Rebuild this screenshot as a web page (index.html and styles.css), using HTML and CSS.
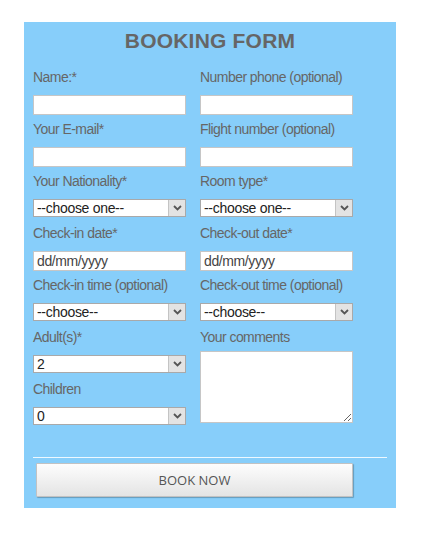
FILE: index.html
```html
<!DOCTYPE html>
<html lang="en">
<head>
  <meta charset="UTF-8">
  <meta name="viewport" content="width=device-width, initial-scale=1.0">
  <title>Booking Form</title>
  <link rel="stylesheet" href="styles.css">
</head>
<body>
  <div class="booking">
    <h2 class="booking-title">BOOKING FORM</h2>

    <form class="booking-grid" id="booking-form">
      <div class="field">
        <label for="name">Name:*</label>
        <input type="text" id="name">
      </div>
      <div class="field">
        <label for="phone">Number phone (optional)</label>
        <input type="text" id="phone">
      </div>

      <div class="field">
        <label for="email">Your E-mail*</label>
        <input type="text" id="email">
      </div>
      <div class="field">
        <label for="flight">Flight number (optional)</label>
        <input type="text" id="flight">
      </div>

      <div class="field">
        <label for="nationality">Your Nationality*</label>
        <div class="select-wrap">
          <select id="nationality"><option>--choose one--</option></select>
          <span class="select-arrow"><svg width="9" height="6" viewBox="0 0 9 6"><path d="M1 1l3.5 3.5L8 1" fill="none" stroke="#555" stroke-width="1.8"/></svg></span>
        </div>
      </div>
      <div class="field">
        <label for="room">Room type*</label>
        <div class="select-wrap">
          <select id="room"><option>--choose one--</option></select>
          <span class="select-arrow"><svg width="9" height="6" viewBox="0 0 9 6"><path d="M1 1l3.5 3.5L8 1" fill="none" stroke="#555" stroke-width="1.8"/></svg></span>
        </div>
      </div>

      <div class="field">
        <label for="checkin">Check-in date*</label>
        <input type="text" id="checkin" placeholder="dd/mm/yyyy">
      </div>
      <div class="field">
        <label for="checkout">Check-out date*</label>
        <input type="text" id="checkout" placeholder="dd/mm/yyyy">
      </div>

      <div class="field">
        <label for="checkin-time">Check-in time (optional)</label>
        <div class="select-wrap">
          <select id="checkin-time"><option>--choose--</option></select>
          <span class="select-arrow"><svg width="9" height="6" viewBox="0 0 9 6"><path d="M1 1l3.5 3.5L8 1" fill="none" stroke="#555" stroke-width="1.8"/></svg></span>
        </div>
      </div>
      <div class="field">
        <label for="checkout-time">Check-out time (optional)</label>
        <div class="select-wrap">
          <select id="checkout-time"><option>--choose--</option></select>
          <span class="select-arrow"><svg width="9" height="6" viewBox="0 0 9 6"><path d="M1 1l3.5 3.5L8 1" fill="none" stroke="#555" stroke-width="1.8"/></svg></span>
        </div>
      </div>

      <div class="field">
        <label for="adults">Adult(s)*</label>
        <div class="select-wrap">
          <select id="adults"><option>2</option></select>
          <span class="select-arrow"><svg width="9" height="6" viewBox="0 0 9 6"><path d="M1 1l3.5 3.5L8 1" fill="none" stroke="#555" stroke-width="1.8"/></svg></span>
        </div>
      </div>
      <div class="field field-comments">
        <label for="comments">Your comments</label>
        <textarea id="comments"></textarea>
      </div>

      <div class="field">
        <label for="children">Children</label>
        <div class="select-wrap">
          <select id="children"><option>0</option></select>
          <span class="select-arrow"><svg width="9" height="6" viewBox="0 0 9 6"><path d="M1 1l3.5 3.5L8 1" fill="none" stroke="#555" stroke-width="1.8"/></svg></span>
        </div>
      </div>
    </form>

    <hr class="divider">
    <button type="submit" form="booking-form" class="book-btn">BOOK NOW</button>
  </div>
</body>
</html>
```

FILE: styles.css
```css
/* Page */
body {
  margin: 0;
  background: #fff;
  font-family: "Liberation Sans", Arial, sans-serif;
}

/* Panel */
.booking {
  width: 372px;
  box-sizing: border-box;
  margin: 22px 0 0 24px;
  padding: 7px 9px 11px;
  background-color: #87cefa; /* light sky blue */
}

.booking-title {
  margin: 0;
  text-align: center;
  font-size: 21px;
  line-height: 24px;
  font-weight: bold;
  color: #666;
  letter-spacing: 0.2px;
}

/* Fields */
.booking-grid {
  display: grid;
  grid-template-columns: 153px 153px;
  grid-auto-rows: 52px;
  column-gap: 14px;
  margin-top: 16px;
}

.field label {
  display: block;
  font-size: 14px;
  line-height: 16px;
  letter-spacing: -0.55px;
  white-space: nowrap;
  color: #666;
  margin-bottom: 10px;
}

.field input {
  display: block;
  width: 153px;
  height: 20px;
  box-sizing: border-box;
  margin: 0;
  padding: 0 3px;
  border: 1px solid #c6c6c6;
  background: #fff;
  font-family: "Liberation Sans", Arial, sans-serif;
  font-size: 14px;
  letter-spacing: -0.4px;
  color: #333;
}

.field input::placeholder {
  color: #444;
}

.field-comments {
  grid-row: span 2;
}

.field-comments label {
  margin-bottom: 6px;
}

.field textarea {
  display: block;
  width: 153px;
  height: 72px;
  box-sizing: border-box;
  margin: 0;
  border: 1px solid #c6c6c6;
  background: #fff;
}

/* Selects */
.select-wrap {
  position: relative;
  width: 153px;
  height: 18px;
}

.select-wrap select {
  appearance: none;
  -webkit-appearance: none;
  display: block;
  width: 100%;
  height: 18px;
  box-sizing: border-box;
  margin: 0;
  padding: 0 0 0 3px;
  border: 1px solid #a9a9a9;
  border-radius: 0;
  background: #fff;
  font-family: "Liberation Sans", Arial, sans-serif;
  font-size: 14px;
  line-height: 16px;
  letter-spacing: -0.3px;
  color: #222;
}

.select-arrow {
  position: absolute;
  top: 1px;
  right: 1px;
  bottom: 1px;
  width: 16px;
  display: flex;
  align-items: center;
  justify-content: center;
  background: #e3e3e3;
  border-left: 1px solid #c4c4c4;
  pointer-events: none;
}

/* Footer of the form */
.divider {
  margin: 24px 0 5px;
  border: 0;
  border-top: 1px solid rgba(255, 255, 255, 0.85);
}

.book-btn {
  display: block;
  width: 317px;
  height: 34px;
  margin-left: 3px;
  border: 1px solid #c2c2c2;
  border-radius: 1px;
  background: linear-gradient(#fdfdfd, #e4e4e4);
  box-shadow: 1px 1px 1px rgba(0, 0, 0, 0.25);
  font-family: "Open Sans", sans-serif;
  font-size: 13px;
  color: #555;
  cursor: pointer;
}
```
